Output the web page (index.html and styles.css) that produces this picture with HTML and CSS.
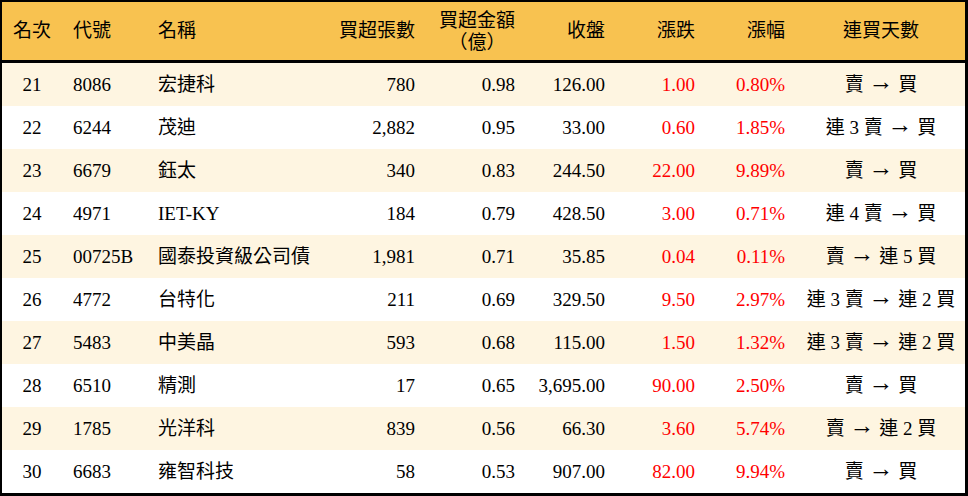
FILE: index.html
```html
<!DOCTYPE html>
<html lang="zh-Hant">
<head>
<meta charset="utf-8">
<link rel="stylesheet" href="styles.css">
</head>
<body>
<div class="frame">
<table class="rank">
<colgroup>
<col class="c1"><col class="c2"><col class="c3"><col class="c4"><col class="c5"><col class="c6"><col class="c7"><col class="c8"><col class="c9">
</colgroup>
<thead>
<tr>
<th class="ctr">名次</th>
<th class="lft">代號</th>
<th class="lft">名稱</th>
<th class="rgt">買超張數</th>
<th class="rgt"><span class="two">買超金額<br>（億）</span></th>
<th class="rgt">收盤</th>
<th class="rgt">漲跌</th>
<th class="rgt">漲幅</th>
<th class="ctr">連買天數</th>
</tr>
</thead>
<tbody>
<tr class="alt"><td class="ctr">21</td><td class="lft">8086</td><td class="lft">宏捷科</td><td class="rgt">780</td><td class="rgt">0.98</td><td class="rgt">126.00</td><td class="rgt up">1.00</td><td class="rgt up">0.80%</td><td class="ctr">賣 <span class="arr">→</span> 買</td></tr>
<tr><td class="ctr">22</td><td class="lft">6244</td><td class="lft">茂迪</td><td class="rgt">2,882</td><td class="rgt">0.95</td><td class="rgt">33.00</td><td class="rgt up">0.60</td><td class="rgt up">1.85%</td><td class="ctr">連 3 賣 <span class="arr">→</span> 買</td></tr>
<tr class="alt"><td class="ctr">23</td><td class="lft">6679</td><td class="lft">鈺太</td><td class="rgt">340</td><td class="rgt">0.83</td><td class="rgt">244.50</td><td class="rgt up">22.00</td><td class="rgt up">9.89%</td><td class="ctr">賣 <span class="arr">→</span> 買</td></tr>
<tr><td class="ctr">24</td><td class="lft">4971</td><td class="lft">IET-KY</td><td class="rgt">184</td><td class="rgt">0.79</td><td class="rgt">428.50</td><td class="rgt up">3.00</td><td class="rgt up">0.71%</td><td class="ctr">連 4 賣 <span class="arr">→</span> 買</td></tr>
<tr class="alt"><td class="ctr">25</td><td class="lft">00725B</td><td class="lft">國泰投資級公司債</td><td class="rgt">1,981</td><td class="rgt">0.71</td><td class="rgt">35.85</td><td class="rgt up">0.04</td><td class="rgt up">0.11%</td><td class="ctr">賣 <span class="arr">→</span> 連 5 買</td></tr>
<tr><td class="ctr">26</td><td class="lft">4772</td><td class="lft">台特化</td><td class="rgt">211</td><td class="rgt">0.69</td><td class="rgt">329.50</td><td class="rgt up">9.50</td><td class="rgt up">2.97%</td><td class="ctr">連 3 賣 <span class="arr">→</span> 連 2 買</td></tr>
<tr class="alt"><td class="ctr">27</td><td class="lft">5483</td><td class="lft">中美晶</td><td class="rgt">593</td><td class="rgt">0.68</td><td class="rgt">115.00</td><td class="rgt up">1.50</td><td class="rgt up">1.32%</td><td class="ctr">連 3 賣 <span class="arr">→</span> 連 2 買</td></tr>
<tr><td class="ctr">28</td><td class="lft">6510</td><td class="lft">精測</td><td class="rgt">17</td><td class="rgt">0.65</td><td class="rgt">3,695.00</td><td class="rgt up">90.00</td><td class="rgt up">2.50%</td><td class="ctr">賣 <span class="arr">→</span> 買</td></tr>
<tr class="alt"><td class="ctr">29</td><td class="lft">1785</td><td class="lft">光洋科</td><td class="rgt">839</td><td class="rgt">0.56</td><td class="rgt">66.30</td><td class="rgt up">3.60</td><td class="rgt up">5.74%</td><td class="ctr">賣 <span class="arr">→</span> 連 2 買</td></tr>
<tr><td class="ctr">30</td><td class="lft">6683</td><td class="lft">雍智科技</td><td class="rgt">58</td><td class="rgt">0.53</td><td class="rgt">907.00</td><td class="rgt up">82.00</td><td class="rgt up">9.94%</td><td class="ctr">賣 <span class="arr">→</span> 買</td></tr>
</tbody>
</table>
</div>
</body>
</html>
```

FILE: styles.css
```css
html, body {
  margin: 0;
  padding: 0;
  background: #ffffff;
}

.frame {
  width: 968px;
  height: 496px;
  box-sizing: border-box;
  border-style: solid;
  border-color: #000000;
  border-width: 2px 3px 3px 2px;
  overflow: hidden;
}

.rank {
  width: 963px;
  table-layout: fixed;
  border-collapse: separate;
  border-spacing: 0;
  font-family: "Liberation Serif", "Noto Sans CJK TC", serif;
  font-size: 19px;
  color: #000000;
}

.c1 { width: 60px; }
.c2 { width: 85px; }
.c3 { width: 180px; }
.c4 { width: 100px; }
.c5 { width: 100px; }
.c6 { width: 90px; }
.c7 { width: 90px; }
.c8 { width: 90px; }
.c9 { width: 168px; }

.rank th {
  height: 58px;
  padding: 0 12px 0 11px;
  background: #f8c250;
  font-weight: normal;
  line-height: 22px;
  border-bottom: 3px solid #000000;
  vertical-align: middle;
  white-space: nowrap;
}

.rank td {
  height: 43px;
  padding: 0 12px 0 11px;
  line-height: 22px;
  vertical-align: middle;
  white-space: nowrap;
}

.rank tr.alt td {
  background: #fef5e1;
}

.ctr { text-align: center; }
.lft { text-align: left; }
.rgt { text-align: right; }

.rank th.ctr, .rank td.ctr {
  padding-left: 0;
  padding-right: 0;
}

.two {
  display: inline-block;
  text-align: center;
  padding-top: 1px;
}

.arr {
  font-family: "Liberation Serif", serif;
  font-size: 25px;
  line-height: 0;
  vertical-align: 1px;
}

.up {
  color: #ff0000;
}
```
